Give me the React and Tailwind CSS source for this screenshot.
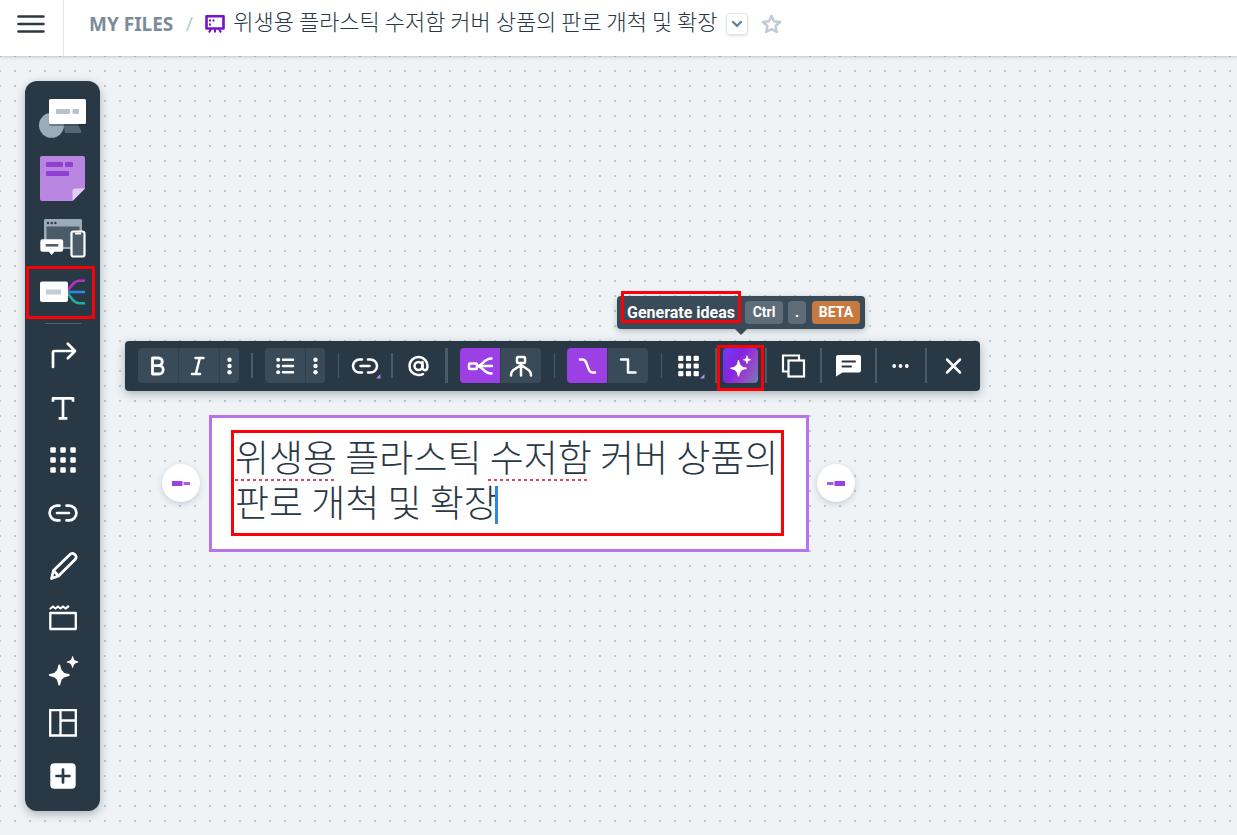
import React, { useState } from 'react';
import clsx from 'clsx';

const BOARD_TITLE = '위생용 플라스틱 수저함 커버 상품의 판로 개척 및 확장';

const Sparkle = ({ cx, cy, r }) => {
  const k = r * 0.32;
  return (
    <path
      d={`M${cx} ${cy - r} Q${cx + k * 0.5} ${cy - k} ${cx + k} ${cy - k} Q${cx + k} ${cy - k * 0.5} ${cx + r} ${cy} Q${cx + k} ${cy + k * 0.5} ${cx + k} ${cy + k} Q${cx + k * 0.5} ${cy + k} ${cx} ${cy + r} Q${cx - k * 0.5} ${cy + k} ${cx - k} ${cy + k} Q${cx - k} ${cy + k * 0.5} ${cx - r} ${cy} Q${cx - k} ${cy - k * 0.5} ${cx - k} ${cy - k} Q${cx - k * 0.5} ${cy - k} ${cx} ${cy - r} Z`}
      fill="#fff"
      stroke="#fff"
      strokeWidth={r * 0.2}
      strokeLinejoin="round"
    />
  );
};

const DotGrid = ({ x, y, size, step }) => (
  <g fill="#fff" stroke="none">
    {[0, 1, 2].map((row) =>
      [0, 1, 2].map((col) => (
        <rect key={`${row}-${col}`} x={x + col * step} y={y + row * step} width={size} height={size} rx="1" />
      ))
    )}
  </g>
);

const libraries = [
  {
    label: 'Shapes',
    height: 'h-[60px]',
    viewBox: '0 0 75 60',
    icon: (
      <>
        <path d="M40 45 L55 45 Q57 44.500 56 42.500 L51 33 L38 33 Z" fill="#556674" />
        <circle cx="26.500" cy="37.300" r="12.500" fill="#9babb8" />
        <rect x="24" y="12" width="38" height="26" rx="2" fill="#1c2731" opacity="0.35" />
        <rect x="24" y="11" width="37" height="25" rx="1.500" fill="#fff" />
        <rect x="31" y="21" width="14" height="5" rx="1" fill="#b8c2c9" />
        <rect x="47.500" y="21" width="6.500" height="5" rx="1" fill="#b8c2c9" />
      </>
    ),
  },
  {
    label: 'Sticky note',
    height: 'h-[60px]',
    viewBox: '0 0 75 60',
    icon: (
      <>
        <path d="M17 8 H58 Q60 8 60 10 V40.500 L47.500 53 H17 Q15 53 15 51 V10 Q15 8 17 8 Z" fill="#b886e0" />
        <path d="M60 40.500 H50 Q47.500 40.500 47.500 43 V53 Z" fill="#e2cdf3" />
        <g fill="#8f3fd1">
          <rect x="21" y="14" width="17" height="5" rx="1" />
          <rect x="40" y="14" width="8" height="5" rx="1" />
          <rect x="21" y="23" width="23" height="5" rx="1" />
        </g>
      </>
    ),
  },
  {
    label: 'Wireframes',
    height: 'h-[60px]',
    viewBox: '0 0 75 60',
    icon: (
      <>
        <rect x="19" y="11" width="38" height="30" rx="1.500" fill="#9babb8" />
        <rect x="21.500" y="18.500" width="33" height="20.500" fill="#4a5b69" />
        <g fill="#293845">
          <circle cx="23" cy="15" r="1.200" />
          <circle cx="26.700" cy="15" r="1.200" />
          <circle cx="30.400" cy="15" r="1.200" />
        </g>
        <path d="M17.500 31.300 H36 Q38.200 31.300 38.200 33.500 V41.500 Q38.200 43.700 36 43.700 H29.500 L26.700 47 L23.800 43.700 H17.500 Q15.300 43.700 15.300 41.500 V33.500 Q15.300 31.300 17.500 31.300 Z" fill="#fff" />
        <path d="M20.700 37.300 H33.300" stroke="#4a5b69" strokeWidth="2.500" />
        <rect x="46.500" y="23.500" width="13" height="25" rx="2" fill="#4a5b69" stroke="#fff" strokeWidth="2.200" />
        <path d="M50 25.500 H56" stroke="#fff" strokeWidth="2" />
      </>
    ),
  },
  {
    label: 'Mind map',
    height: 'h-[50px]',
    viewBox: '0 0 75 50',
    marked: true,
    icon: (
      <>
        <g fill="none" strokeWidth="2.600">
          <path d="M41 23.500 C47 20 47 13 54 12.800 H60" stroke="#b532c8" />
          <path d="M41 24 H60" stroke="#2d88e0" />
          <path d="M41 24.500 C47 28 47 35 54 35.200 H60" stroke="#1fb09a" />
        </g>
        <rect x="15" y="13.500" width="28" height="20.500" rx="2" fill="#fff" />
        <rect x="21" y="21.500" width="15" height="5" rx="0.500" fill="#c3cdd6" />
      </>
    ),
  },
];

const drawTools = [
  {
    label: 'Connector',
    icon: <path d="M28 38 V23.500 Q28 22 29.500 22 H49.500 M42.800 14.700 L50 22 L42.800 29.300" />,
  },
  {
    label: 'Text',
    icon: <path d="M28 18.500 V16.300 H48 V18.500 M38 16.300 V36 M35 36.300 H41" strokeLinecap="square" />,
  },
  { label: 'Icons', icon: <DotGrid x={25.3} y={13.3} size={5.5} step={10} /> },
  {
    label: 'Link',
    icon: <path d="M34.500 18.600 H32 A7.400 7.400 0 0 0 32 33.400 H34.500 M41.500 18.600 H44 A7.400 7.400 0 0 1 44 33.400 H41.500 M32 26 H44" />,
  },
  {
    label: 'Pencil',
    icon: <path d="M26.500 38.500 L28.500 30.500 L45.500 14 Q47.500 12.500 49.500 14.300 L50.500 15.300 Q52 17.500 50.300 19.300 L33.500 36 Z M28.500 30.500 L33.500 36" />,
  },
  {
    label: 'Frame',
    icon: (
      <>
        <rect x="25.300" y="21" width="25.500" height="16" strokeWidth="2.300" />
        <path d="M25.500 16.500 L28 14.500 L30.500 16.500 L33 14.500 L35.500 16.500 L38 14.500 L40.500 16.500 L43.300 14.500" strokeWidth="2.200" />
      </>
    ),
  },
  {
    label: 'Generate',
    icon: (
      <>
        <Sparkle cx={34.3} cy={30} r={9.5} />
        <Sparkle cx={47.6} cy={17} r={5.3} />
      </>
    ),
  },
  {
    label: 'Templates',
    icon: <path d="M25.200 13.200 H50.800 V38.500 H25.200 Z M35.500 13.200 V38.500 M35.500 23.500 H50.800" strokeWidth="2.300" strokeLinejoin="miter" />,
  },
  {
    label: 'More',
    icon: (
      <>
        <rect x="25.300" y="13.300" width="25.400" height="25.400" rx="4" fill="#fff" stroke="none" />
        <path d="M38 19.500 V32.500 M31.500 26 H44.500" stroke="#293845" />
      </>
    ),
  },
];

const RedMark = ({ className }) => (
  <span className={clsx('pointer-events-none absolute border-[3px] border-[#fb0007]', className)} />
);

const Sidebar = () => (
  <aside className="z-10 flex w-[75px] shrink-0 flex-col rounded-xl bg-[#293845] pt-[7px] pb-[9px] shadow-[0_3px_10px_rgba(40,55,70,0.35)]">
    {libraries.map((item) => (
      <button key={item.label} aria-label={item.label} className={clsx('relative w-full shrink-0', item.height)}>
        <svg viewBox={item.viewBox} className="h-full w-full">
          {item.icon}
        </svg>
        {item.marked && <RedMark className="-top-0.5 right-[5px] -bottom-px left-px" />}
      </button>
    ))}
    <div className="mx-auto mt-[5px] mb-[5px] h-px w-9 shrink-0 bg-[#55646f]" />
    <div className="flex flex-1 flex-col justify-between">
      {drawTools.map((tool) => (
        <button key={tool.label} aria-label={tool.label} className="h-[52px] w-full">
          <svg
            viewBox="0 0 75 52"
            className="h-full w-full"
            fill="none"
            stroke="#fff"
            strokeWidth="2.700"
            strokeLinecap="round"
            strokeLinejoin="round"
          >
            {tool.icon}
          </svg>
        </button>
      ))}
    </div>
  </aside>
);

const Header = () => (
  <header className="relative z-20 flex h-14 shrink-0 items-stretch bg-white shadow-[0_1px_3px_rgba(40,55,70,0.25)]">
    <button aria-label="Menu" className="flex w-16 shrink-0 justify-center border-r border-[#e4e8eb] pt-[15px] pr-px">
      <svg width="28" height="18" stroke="#293845" strokeWidth="2.600" strokeLinecap="round">
        <path d="M1.500 1.500 H26.500 M1.500 9 H26.500 M1.500 16.500 H26.500" />
      </svg>
    </button>
    <nav className="flex h-12 items-center pl-[25px]">
      <a href="#files" className="font-['Noto_Sans'] text-[19px] font-bold text-[#7b8b99]">MY FILES</a>
      <span className="w-8 text-center font-['Open_Sans'] text-xl text-[#b9c8d5]">/</span>
      <svg width="20" height="19" viewBox="0 0 20 19" className="shrink-0">
        <path d="M1.500 1.300 H18.500 V13.500 H1.500 Z" fill="#fff" stroke="#7414c8" strokeWidth="2.600" strokeLinejoin="round" />
        <path d="M6 14 L4 17.500 M10 14 V17.500 M14 14 L16 17.500" stroke="#7414c8" strokeWidth="2" />
        <path d="M4 4.500 H6 V6.500 H4 Z M7.500 4.500 H9.500 V6.500 H7.500 Z M4 8.500 H6 V10.500 H4 Z" fill="#7414c8" />
      </svg>
      <h1 className="ml-2 pb-2 font-['Noto_Sans_CJK_KR',sans-serif] text-[22px] leading-8 font-light whitespace-nowrap text-[#293845]">
        {BOARD_TITLE}
      </h1>
      <button aria-label="Board menu" className="ml-2 flex size-[22px] shrink-0 items-center justify-center rounded border border-[#dfe7ee] shadow-sm">
        <svg width="12" height="8" fill="none" stroke="#6f8191" strokeWidth="2.400" strokeLinecap="round">
          <path d="M2 2 L6 5.800 L10 2" />
        </svg>
      </button>
      <button aria-label="Add to favourites" className="ml-[13px] shrink-0">
        <svg width="21" height="20" viewBox="0 0 21 20" fill="none" stroke="#bfcbd6" strokeWidth="2.400" strokeLinejoin="round">
          <path d="M10.500 1.800 L13 7.300 L19 8 L14.600 12 L15.800 18 L10.500 15 L5.200 18 L6.400 12 L2 8 L8 7.300 Z" />
        </svg>
      </button>
    </nav>
  </header>
);

const Separator = ({ className }) => <span className={clsx('shrink-0 bg-[#4b5a66]', className)} />;

const Tool = ({ label, className, children, onClick }) => (
  <button
    aria-label={label}
    onClick={onClick}
    className={clsx('relative flex h-[35px] shrink-0 items-center justify-center', className)}
  >
    <svg
      viewBox="-12.5 -13 26 26"
      className="size-[26px] shrink-0 overflow-visible"
      fill="none"
      stroke="#fff"
      strokeWidth="2.500"
      strokeLinecap="round"
      strokeLinejoin="round"
    >
      {children}
    </svg>
  </button>
);

const Kebab = () => (
  <g fill="#fff" stroke="none">
    <circle cy="-6.300" r="2.200" />
    <circle r="2.200" />
    <circle cy="6.300" r="2.200" />
  </g>
);

const Toolbar = () => {
  const [layout, setLayout] = useState('side');
  const [line, setLine] = useState('curved');
  const toggle = (on) => (on ? 'bg-[#9c3fe4]' : 'bg-[#394a58]');

  return (
    <div role="toolbar" className="rounded bg-[#293845] pt-[7px] pb-2 pl-[13px] shadow-[0_3px_10px_rgba(40,55,70,0.35)]">
      <div className="flex items-center">
        <div className="flex gap-px overflow-hidden rounded-sm bg-[#2f404d]">
          <Tool label="Bold" className="w-10 bg-[#394a58]">
            <path d="M-5 -8 V8 H1.500 A4.200 4.200 0 0 0 1.500 -0.400 H-5 M-5 -8 H1 A3.800 3.800 0 0 1 1 -0.400" strokeWidth="2.800" />
          </Tool>
          <Tool label="Italic" className="w-10 bg-[#394a58]">
            <path d="M-3 -8 H5 M-6.500 8 H1.500 M1.300 -8 L-2.700 8" />
          </Tool>
          <Tool label="More text styles" className="w-[19px] bg-[#394a58]"><Kebab /></Tool>
        </div>
        <Separator className="mx-3 h-[25px] w-0.5" />
        <div className="flex gap-px overflow-hidden rounded-sm bg-[#2f404d]">
          <Tool label="List" className="w-10 bg-[#394a58]">
            <path d="M-1.500 -6.300 H8.500 M-1.500 0 H8.500 M-1.500 6.300 H8.500" />
            <g fill="#fff" stroke="none">
              <circle cx="-6.300" cy="-6.300" r="2" />
              <circle cx="-6.300" r="2" />
              <circle cx="-6.300" cy="6.300" r="2" />
            </g>
          </Tool>
          <Tool label="More list styles" className="w-[19px] bg-[#394a58]"><Kebab /></Tool>
        </div>
        <Separator className="ml-[13px] h-[25px] w-px" />
        <Tool label="Link" className="w-[52px]">
          <path d="M-2.500 -6.500 H-5 A6.500 6.500 0 0 0 -5 6.500 H-2.500 M3.500 -6.500 H6 A6.500 6.500 0 0 1 6 6.500 H3.500 M-4 0 H5" />
          <path d="M16 8 V12.500 H11.500 Z" fill="#b886f0" stroke="none" />
        </Tool>
        <Separator className="h-[25px] w-0.5" />
        <Tool label="Mention" className="w-[52px]">
          <circle r="4" />
          <path d="M4 -4 V1.500 Q4.200 4.200 6.600 4.200 Q9 4 9 0 A9 9 0 1 0 -0.500 9 Q2.500 9.300 4.500 8" />
        </Tool>
        <Separator className="mr-3 h-[35px] w-[3px]" />
        <div className="flex gap-px overflow-hidden rounded-sm bg-[#2f404d]">
          <Tool label="Side layout" onClick={() => setLayout('side')} className={clsx('w-10', toggle(layout === 'side'))}>
            <rect x="-10.500" y="-2.500" width="8" height="5.500" rx="1" />
            <path d="M-2.500 0 H12.500 M-1.500 0 C4 -1 4 -7.500 12 -7.500 M-1.500 0 C4 1 4 7.500 12 7.500" />
          </Tool>
          <Tool label="Tree layout" onClick={() => setLayout('tree')} className={clsx('w-10', toggle(layout === 'tree'))}>
            <rect x="-3.500" y="-9" width="8" height="6" rx="1" />
            <path d="M0.500 -3 V9.500 M0.500 -1 L-5.500 3 Q-9.500 5 -9.500 9.500 M0.500 -1 L6.500 3 Q10.500 5 10.500 9.500" />
          </Tool>
        </div>
        <Separator className="mr-3 ml-[13px] h-[25px] w-px" />
        <div className="flex gap-px overflow-hidden rounded-sm bg-[#2f404d]">
          <Tool label="Curved line" onClick={() => setLine('curved')} className={clsx('w-10', toggle(line === 'curved'))}>
            <path d="M-6.500 -6.500 H-4 C2.500 -6.500 -0.500 6.500 6 6.500 H8.500" />
          </Tool>
          <Tool label="Elbow line" onClick={() => setLine('elbow')} className={clsx('w-10', toggle(line === 'elbow'))}>
            <path d="M-6.500 -6.500 H0.500 V6.500 H8" />
          </Tool>
        </div>
        <Separator className="ml-[13px] h-[25px] w-px" />
        <Tool label="Icons" className="w-[53px]">
          <DotGrid x={-10.3} y={-10.3} size={5.2} step={7.7} />
          <path d="M16 8 V12.500 H11.500 Z" fill="#b886f0" stroke="none" />
        </Tool>
        <Separator className="mr-1.5 h-[35px] w-0.5" />
        <div className="relative mr-[7px]">
          <Tool label="Generate ideas" className="w-[35px] rounded-sm bg-[linear-gradient(120deg,#6b3df0_0%,#8424e0_40%,#9a3fcf_65%,#6f7fae_100%)]">
            <Sparkle cx={-2} cy={2.3} r={7.5} />
            <Sparkle cx={6.5} cy={-6.2} r={3.7} />
          </Tool>
          <RedMark className="-top-[3px] -right-1.5 -bottom-2 -left-1.5" />
        </div>
        <Separator className="h-[35px] w-0.5" />
        <Tool label="Duplicate" className="w-[53px]">
          <path d="M-5 5.500 H-10.500 V-10.500 H5.500 V-6" strokeWidth="2.200" strokeLinejoin="miter" strokeLinecap="butt" />
          <rect x="-5" y="-5.500" width="15.500" height="16" strokeWidth="2.200" strokeLinejoin="miter" />
        </Tool>
        <Separator className="h-[35px] w-0.5" />
        <Tool label="Comment" className="w-[53px]">
          <path d="M-10.500 -11 H10.500 Q12.500 -11 12.500 -9 V4.500 Q12.500 6.500 10.500 6.500 H-6 L-12.500 10.500 V-9 Q-12.500 -11 -10.500 -11 Z" fill="#fff" stroke="none" />
          <path d="M-6 -4.500 H6.500 M-6 0.500 H2.500" stroke="#293845" strokeWidth="2" />
        </Tool>
        <Separator className="h-[35px] w-0.5" />
        <Tool label="More options" className="w-12">
          <g fill="#fff" stroke="none">
            <circle cx="-6.300" r="1.900" />
            <circle r="1.900" />
            <circle cx="6.300" r="1.900" />
          </g>
        </Tool>
        <Separator className="h-[35px] w-0.5" />
        <Tool label="Close" className="w-[53px]">
          <path d="M-6.500 -6.500 L6.500 6.500 M6.500 -6.500 L-6.500 6.500" />
        </Tool>
      </div>
    </div>
  );
};

const Tooltip = () => (
  <div
    role="tooltip"
    className="relative flex h-[33px] items-center rounded-sm bg-[#394a58] pr-[5px] pl-2.5 font-['Roboto'] text-base leading-[23px] font-bold whitespace-nowrap text-white shadow-[0_2px_6px_rgba(40,55,70,0.3)]"
  >
    <span className="w-[118px]">Generate ideas</span>
    <kbd className="w-[38px] rounded-sm bg-[#5f6d79] text-center font-['Roboto'] text-sm leading-[23px]">Ctrl</kbd>
    <kbd className="ml-[5px] w-[18px] rounded-sm bg-[#5f6d79] text-center font-['Roboto'] text-sm leading-[23px]">.</kbd>
    <span className="ml-1.5 w-12 rounded-sm bg-[#c77a40] text-center text-sm leading-[23px]">BETA</span>
    <svg width="12" height="6" className="absolute top-full left-[118px]">
      <path d="M0 0 H12 L6 6 Z" fill="#394a58" />
    </svg>
    <RedMark className="-top-[5px] bottom-1.5 left-1 w-[120px]" />
  </div>
);

const spellDots =
  'pointer-events-none absolute h-0.5 bg-[repeating-linear-gradient(90deg,#d9486a_0_3px,transparent_3px_6px)]';

const TopicNode = () => (
  <div className="relative border-[3px] border-[#b673ea] bg-white px-[23px] pt-4 pb-[25px]">
    <textarea
      aria-label="Topic"
      defaultValue={BOARD_TITLE}
      rows={2}
      spellCheck={false}
      className="block w-full resize-none overflow-hidden font-['Noto_Sans_CJK_KR',sans-serif] text-[37px] leading-[45px] font-light text-[#293845] outline-none"
    />
    <span className={clsx(spellDots, 'top-[61px] left-[23px] w-[101px]')} />
    <span className={clsx(spellDots, 'top-[61px] left-[276px] w-[101px]')} />
    <span className="absolute top-[68px] left-[283px] h-[38px] w-[3px] bg-[#2d88e0]" />
    <RedMark className="top-3 right-[22px] bottom-[13px] left-[19px]" />
  </div>
);

const AddBranch = ({ side, className }) => (
  <button
    aria-label={`Add topic on the ${side}`}
    className={clsx('absolute top-[408px] flex size-[38px] items-center justify-center rounded-full bg-white shadow-[0_2px_6px_rgba(40,55,70,0.2)]', className)}
  >
    <svg width="18" height="5" className={clsx(side === 'right' && 'rotate-180')}>
      <path d="M0 0 H10.500 V5 H0 Z" fill="#9c3fe4" />
      <path d="M11.500 1 H18 V4 H11.500 Z" fill="#a95be8" />
    </svg>
  </button>
);

export default function App() {
  return (
    <div className="flex min-h-screen flex-col overflow-x-hidden bg-[#eff3f6]">
      <Header />
      <main className="relative flex flex-1 bg-[linear-gradient(#eff3f6_13px,transparent_13px),linear-gradient(90deg,#eff3f6_13px,#bfc8d1_13px)] bg-size-[15px_15px] bg-position-[1px_1px] p-[25px] pb-6">
        <Sidebar />
        {/* objects placed on the free canvas */}
        <div className="absolute top-[240px] left-[617px]"><Tooltip /></div>
        <div className="absolute top-[285px] left-[125px]"><Toolbar /></div>
        <div className="absolute top-[359px] left-[209px] w-[600px]"><TopicNode /></div>
        <AddBranch side="left" className="left-[162px]" />
        <AddBranch side="right" className="left-[817px]" />
      </main>
    </div>
  );
}
